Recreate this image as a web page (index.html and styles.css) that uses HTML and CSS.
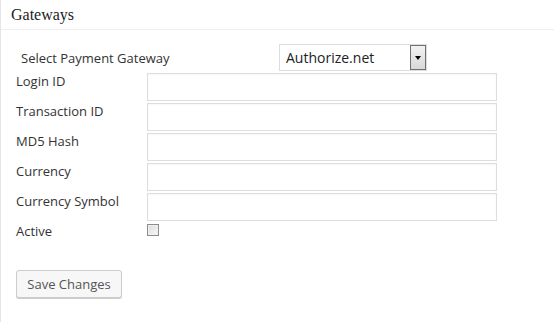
FILE: index.html
```html
<!DOCTYPE html>
<html>
<head>
<meta charset="utf-8">
<link rel="stylesheet" href="styles.css">
</head>
<body>
<div class="panel">
  <div class="header"><h3 class="title">Gateways</h3></div>
  <form class="form">
    <div class="gateway-row">
      <label class="gateway-label">Select Payment Gateway</label>
      <div class="select">
        <span class="select-value">Authorize.net</span>
        <span class="select-btn"><span class="arrow"></span></span>
      </div>
    </div>
    <div class="fields">
      <label class="lbl">Login ID</label><input class="inp" type="text">
      <label class="lbl">Transaction ID</label><input class="inp" type="text">
      <label class="lbl">MD5 Hash</label><input class="inp" type="text">
      <label class="lbl">Currency</label><input class="inp" type="text">
      <label class="lbl">Currency Symbol</label><input class="inp" type="text">
      <label class="lbl">Active</label><span class="check"></span>
    </div>
    <button type="button" class="save">Save Changes</button>
  </form>
</div>
</body>
</html>
```
FILE: styles.css
```css
html, body {
  margin: 0;
  padding: 0;
  background: #fff;
}
body {
  font-family: "Open Sans", "Liberation Sans", sans-serif;
  font-size: 13px;
  color: #444;
}
.panel {
  border-left: 1px solid #e5e5e5;
  height: 322px;
  box-sizing: border-box;
}
.header {
  height: 29px;
  border-bottom: 1px solid #eeeeee;
  padding-left: 10px;
}
.title {
  margin: 0;
  font-family: "Liberation Serif", "DejaVu Serif", serif;
  font-weight: normal;
  font-size: 16px;
  line-height: 30px;
  color: #222;
}
.form {
  margin: 0;
}
.gateway-row {
  display: flex;
  align-items: center;
  margin-top: 14px;
  padding-left: 20px;
}
.gateway-label {
  width: 258px;
  line-height: 18px;
  color: #333;
}
.select {
  width: 148px;
  height: 27px;
  box-sizing: border-box;
  border: 1px solid #dddddd;
  display: flex;
  align-items: center;
  justify-content: space-between;
  padding-left: 6px;
}
.select-value {
  font-size: 14px;
  color: #222;
}
.select-btn {
  width: 16px;
  height: 25px;
  box-sizing: border-box;
  border: 1px solid #707070;
  background: linear-gradient(#f2f2f2, #d8d8d8);
  display: flex;
  align-items: center;
  justify-content: center;
}
.arrow {
  width: 0;
  height: 0;
  border-left: 3px solid transparent;
  border-right: 3px solid transparent;
  border-top: 4px solid #000;
}
.fields {
  display: grid;
  grid-template-columns: 131px 350px;
  grid-auto-rows: 28px;
  row-gap: 2px;
  margin-top: 2px;
  padding-left: 15px;
}
.lbl {
  align-self: start;
  margin-top: -1px;
  line-height: 18px;
  color: #333;
}
.inp {
  width: 350px;
  height: 28px;
  box-sizing: border-box;
  border: 1px solid #dddddd;
  box-shadow: inset 0 1px 2px rgba(0,0,0,0.04);
  margin: 0;
  padding: 0 4px;
  font: inherit;
  background: #fff;
}
.check {
  width: 12px;
  height: 12px;
  box-sizing: border-box;
  border: 1px solid #8c8c8c;
  background: linear-gradient(135deg, #dcdcdc, #f8f8f8);
  box-shadow: inset 0 0 0 1px #f0f0f0;
  margin-top: 1px;
}
.save {
  display: block;
  margin: 19px 0 0 15px;
  width: 106px;
  height: 28px;
  box-sizing: border-box;
  border: 1px solid #cccccc;
  border-radius: 3px;
  background: #f7f7f7;
  box-shadow: 0 1px 0 #cccccc;
  font-family: "Open Sans", "Liberation Sans", sans-serif;
  font-size: 13px;
  color: #555;
  padding: 0;
}
```
